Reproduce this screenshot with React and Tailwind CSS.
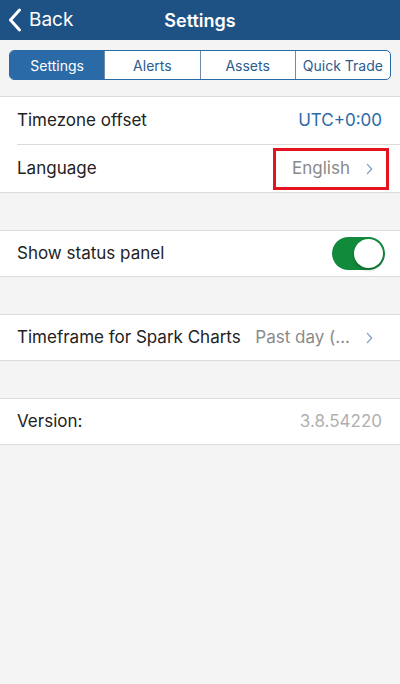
import React from 'react';

const Chevron = ({ className }) => (
  <svg className={className} viewBox="0 0 8 14" fill="none" stroke="currentColor" strokeWidth="1.4" strokeLinecap="round" strokeLinejoin="round">
    <path d="M1.5 1.5L6.5 7L1.5 12.5" />
  </svg>
);

const tabs = ['Settings', 'Alerts', 'Assets', 'Quick Trade'];

const App = () => {
  return (
    <div className="w-[400px] h-[684px] bg-[#f4f4f4] font-['Inter',sans-serif] text-[#222] overflow-hidden">
      {/* Header */}
      <div className="relative h-[40px] bg-[#1e5285] flex items-center justify-center text-white">
        <div className="absolute left-[8px] top-0 h-full flex items-center gap-[7px]">
          <svg className="w-[14px] h-[24px]" viewBox="0 0 14 24" fill="none" stroke="currentColor" strokeWidth="3" strokeLinecap="round" strokeLinejoin="round">
            <path d="M11.5 2L2.5 12L11.5 22" />
          </svg>
          <span className="text-[19px]">Back</span>
        </div>
        <span className="text-[18px] font-semibold">Settings</span>
      </div>

      {/* Segmented control */}
      <div className="pt-[10px] pb-[16px] px-[9px] border-b border-[#dcdcdc]">
        <div className="flex h-[30px] rounded-[5px] border border-[#2a6aa6] overflow-hidden bg-white">
          {tabs.map((t, i) => (
            <div
              key={t}
              className={`flex-1 flex items-center justify-center text-[14px] ${i === 0 ? 'bg-[#2a6aa6] text-white' : 'text-[#2a5d8f] border-l border-[#6f8ba6]'}`}
            >
              {t}
            </div>
          ))}
        </div>
      </div>

      {/* Group 1 */}
      <div className="bg-white border-b border-[#dcdcdc]">
        <div className="h-[47px] flex items-center justify-between pl-[17px] pr-[18px]">
          <span className="text-[17px]">Timezone offset</span>
          <span className="text-[17px] text-[#2a6aa6]">UTC+0:00</span>
        </div>
        <div className="ml-[17px] h-px bg-[#dcdcdc]" />
        <div className="relative h-[47px] flex items-center justify-between pl-[17px] pr-[27px]">
          <span className="text-[17px]">Language</span>
          <div className="flex items-center gap-[16px] text-[#8a8a8a]">
            <span className="text-[17px]">English</span>
            <Chevron className="w-[7px] h-[12px] text-[#7d9dc0]" />
          </div>
          <div className="absolute left-[273px] top-[3px] w-[116px] h-[42px] border-[3px] border-[#e3141f]" />
        </div>
      </div>

      <div className="h-[37px]" />

      {/* Group 2 */}
      <div className="bg-white border-y border-[#dcdcdc] h-[47px] flex items-center justify-between pl-[17px] pr-[15px]">
        <span className="text-[17px]">Show status panel</span>
        <div className="w-[53px] h-[33px] rounded-full bg-[#118a3c] relative">
          <div className="absolute right-[2px] top-[2px] w-[29px] h-[29px] rounded-full bg-white shadow-[0_2px_3px_rgba(0,0,0,0.25)]" />
        </div>
      </div>

      <div className="h-[37px]" />

      {/* Group 3 */}
      <div className="bg-white border-y border-[#dcdcdc] h-[47px] flex items-center justify-between pl-[17px] pr-[27px]">
        <span className="text-[17px]">Timeframe for Spark Charts</span>
        <div className="flex items-center gap-[16px] text-[#8a8a8a]">
          <span className="text-[17px]">Past day (...</span>
          <Chevron className="w-[7px] h-[12px] text-[#7d9dc0]" />
        </div>
      </div>

      <div className="h-[37px]" />

      {/* Group 4 */}
      <div className="bg-white border-y border-[#dcdcdc] h-[47px] flex items-center justify-between pl-[17px] pr-[18px]">
        <span className="text-[17px]">Version:</span>
        <span className="text-[17px] text-[#b0b0b0]">3.8.54220</span>
      </div>
    </div>
  );
};

export default App;
